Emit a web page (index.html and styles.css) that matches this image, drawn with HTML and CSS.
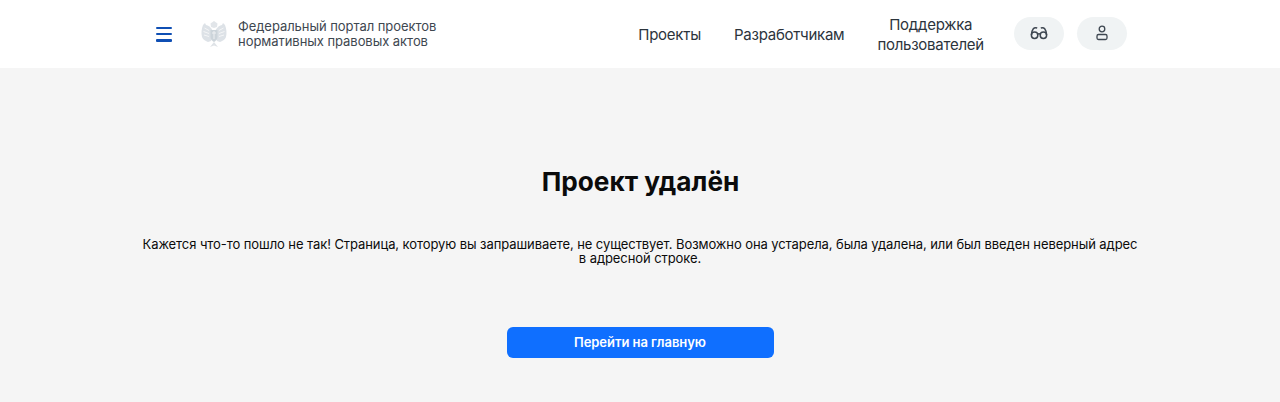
FILE: index.html
```html
<!DOCTYPE html>
<html lang="ru">
<head>
  <meta charset="UTF-8" />
  <meta name="viewport" content="width=device-width, initial-scale=1.0" />
  <title>Проект удалён</title>
  <link rel="stylesheet" href="styles.css">
</head>
<body>
  <header class="header">
    <div class="header-left">
      <button class="burger" aria-label="Меню">
        <span></span><span></span><span></span>
      </button>
      <a class="logo" href="#">
        <svg class="emblem" width="28" height="28" viewBox="0 0 28 28" fill="none">
          <path d="M13 11 C11 7 8 5 6 5 L5 3 L3 5 C1.500 9 1 13 2 17 C3 20 6 21 8 22 L11 21 L13 17 Z" fill="#dde2e7"/>
          <path d="M15 11 C17 7 20 5 22 5 L23 3 L25 5 C26.500 9 27 13 26 17 C25 20 22 21 20 22 L17 21 L15 17 Z" fill="#dde2e7"/>
          <path d="M10.500 3.500 L14 1 L17.500 3.500 L17 7 L14 8 L11 7 Z" fill="#e1e5e9"/>
          <path d="M10.500 10 H17.500 V17 C17.500 19.500 15.500 21 14 22 C12.500 21 10.500 19.500 10.500 17 Z" fill="#ccd4da"/>
          <path d="M14 22 L10 27 L14 25.500 L18 27 Z" fill="#dfe3e7"/>
          <path d="M4.500 8 L9 10.500 M3.500 11.500 L9 13.500 M4 15 L9 16.500 M23.500 8 L19 10.500 M24.500 11.500 L19 13.500 M24 15 L19 16.500" stroke="#f5f6f7" stroke-width="1"/>
          <path d="M12 13 H16 M14 11 V19" stroke="#eef0f2" stroke-width="1"/>
        </svg>
        <span class="logo-text">Федеральный портал проектов<br>нормативных правовых актов</span>
      </a>
    </div>
    <nav class="nav">
      <a href="#">Проекты</a>
      <a href="#">Разработчикам</a>
      <a class="nav-support" href="#">Поддержка<br>пользователей</a>
      <div class="nav-icons">
        <button class="icon-btn" aria-label="Версия для слабовидящих">
          <svg width="18" height="16" viewBox="0 0 18 16" fill="none" stroke="#3d4650" stroke-width="1.500">
            <circle cx="4.600" cy="10.300" r="3.200"/>
            <circle cx="13.400" cy="10.300" r="3.200"/>
            <path d="M7.700 9.300 C8.500 8.600 9.500 8.600 10.300 9.300"/>
            <path d="M1.400 10 C1.600 7.500 2.200 5 3.300 3.700 C4.100 2.800 5.500 2.500 7.200 3"/>
            <path d="M16.600 10 C16.400 7.500 15.800 5 14.700 3.700 C13.900 2.800 12.500 2.500 10.800 3"/>
          </svg>
        </button>
        <button class="icon-btn" aria-label="Войти">
          <svg width="14" height="16" viewBox="0 0 14 16" fill="none" stroke="#3d4650" stroke-width="1.300">
            <circle cx="7" cy="4" r="2.800"/>
            <rect x="2" y="9.500" width="10" height="5" rx="1.500"/>
          </svg>
        </button>
      </div>
    </nav>
  </header>

  <main class="content">
    <h1>Проект удалён</h1>
    <p>Кажется что-то пошло не так! Страница, которую вы запрашиваете, не существует. Возможно она устарела, была удалена, или был введен неверный адрес в адресной строке.</p>
    <a class="btn-home" href="#">Перейти на главную</a>
  </main>
</body>
</html>
```

FILE: styles.css
```css
* {
  box-sizing: border-box;
}

html, body {
  height: 100%;
}

body {
  margin: 0;
  font-family: Inter, "Noto Sans", sans-serif;
  background: #f5f5f5;
  color: #0b0b0b;
  overflow: hidden;
}

a {
  color: inherit;
  text-decoration: none;
}

.header {
  height: 68px;
  background: #fff;
  display: flex;
  align-items: center;
  justify-content: space-between;
  padding: 0 153px 0 156px;
}

.header-left {
  display: flex;
  align-items: center;
  gap: 28px;
}

.burger {
  width: 16px;
  height: 15px;
  padding: 0;
  border: 0;
  background: none;
  display: flex;
  flex-direction: column;
  justify-content: space-between;
}

.burger span {
  display: block;
  height: 2.500px;
  background: #0f4fb4;
  border-radius: 1px;
}

.logo {
  display: flex;
  align-items: center;
  gap: 10px;
}

.logo-text {
  font-size: 13px;
  letter-spacing: -0.05px;
  line-height: 15px;
  color: #3e4750;
}

.nav {
  display: flex;
  align-items: center;
  gap: 33px;
  font-size: 15px;
  letter-spacing: -0.25px;
  line-height: 20px;
  color: #2c343c;
}

.nav > a {
  padding-top: 2px;
}

.nav-support {
  text-align: center;
}

.nav-icons {
  display: flex;
  gap: 13px;
  margin: -2px 0 0 -3px;
}

.icon-btn {
  width: 50px;
  height: 33px;
  padding: 0;
  border: 0;
  border-radius: 17px;
  background: #f0f3f4;
  display: flex;
  align-items: center;
  justify-content: center;
}

.content {
  display: flex;
  flex-direction: column;
  align-items: center;
  padding: 96px 140px 0;
  text-align: center;
}

.content h1 {
  margin: 0;
  padding-left: 1px;
  font-size: 26.200px;
  line-height: 36px;
  font-weight: 700;
}

.content p {
  margin: 37px 0 0;
  font-size: 13px;
  letter-spacing: -0.08px;
  line-height: 14px;
}

.btn-home {
  margin-top: 62px;
  width: 267px;
  height: 31px;
  border-radius: 6px;
  background: #0f6fff;
  color: #fff;
  font-size: 13px;
  letter-spacing: -0.05px;
  font-weight: 600;
  line-height: 31px;
}
```
